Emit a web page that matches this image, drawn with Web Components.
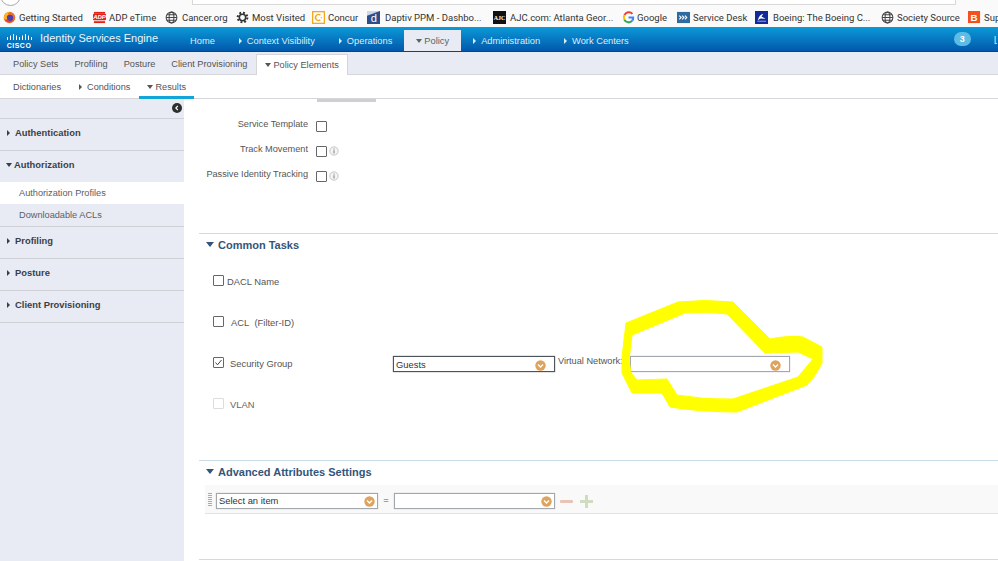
<!DOCTYPE html>
<html>
<head>
<meta charset="utf-8">
<title>Identity Services Engine</title>
<style>
    html, body { margin: 0; padding: 0; background: #fff; }
    body { width: 998px; height: 561px; overflow: hidden; position: relative; font-family: "Liberation Sans", Arial, sans-serif; }
    .vn { font: 9.2px "Liberation Sans", sans-serif; color: #555; display: inline-block; width: 75px; padding-left: 3px; box-sizing: border-box; vertical-align: top; white-space: nowrap; margin-top: 0; }
</style>
</head>
<body>
<browser-bar>
    <bookmark-item icon="firefox" gap="3" width="90">Getting Started</bookmark-item>
    <bookmark-item icon="adp" gap="3" width="72">ADP eTime</bookmark-item>
    <bookmark-item icon="globe" gap="4" width="71">Cancer.org</bookmark-item>
    <bookmark-item icon="gear" gap="3" width="76">Most Visited</bookmark-item>
    <bookmark-item icon="concur" gap="3" width="55">Concur</bookmark-item>
    <bookmark-item icon="daptiv" gap="5" width="126">Daptiv PPM - Dashbo...</bookmark-item>
    <bookmark-item icon="ajc" gap="4" width="129">AJC.com: Atlanta Geor...</bookmark-item>
    <bookmark-item icon="google" gap="2" width="55">Google</bookmark-item>
    <bookmark-item icon="service" gap="3" width="78">Service Desk</bookmark-item>
    <bookmark-item icon="boeing" gap="5" width="126">Boeing: The Boeing C...</bookmark-item>
    <bookmark-item icon="globe" gap="3" width="87">Society Source</bookmark-item>
    <bookmark-item icon="b" gap="3" width="30">Sup</bookmark-item>
</browser-bar>
<ise-header>
    <nav-tab>Home</nav-tab>
    <nav-tab caret="right">Context Visibility</nav-tab>
    <nav-tab caret="right">Operations</nav-tab>
    <nav-tab caret="down" active>Policy</nav-tab>
    <nav-tab caret="right">Administration</nav-tab>
    <nav-tab caret="right">Work Centers</nav-tab>
</ise-header>
<sub-bar kind="second">
    <sub-tab>Policy Sets</sub-tab>
    <sub-tab>Profiling</sub-tab>
    <sub-tab>Posture</sub-tab>
    <sub-tab>Client Provisioning</sub-tab>
    <sub-tab caret="down" mode="card">Policy Elements</sub-tab>
</sub-bar>
<sub-bar kind="third">
    <sub-tab>Dictionaries</sub-tab>
    <sub-tab caret="right" style="margin-left:2px">Conditions</sub-tab>
    <sub-tab caret="down" mode="underline">Results</sub-tab>
</sub-bar>
<main-area>
    <side-menu slot="side">
        <side-group label="Authentication"></side-group>
        <side-group label="Authorization" open>
            <side-link selected>Authorization Profiles</side-link>
            <side-link>Downloadable ACLs</side-link>
        </side-group>
        <side-group label="Profiling"></side-group>
        <side-group label="Posture"></side-group>
        <side-group label="Client Provisioning"></side-group>
    </side-menu>
    <top-options>
        <option-row info="">Service Template</option-row>
        <option-row info="1">Track Movement</option-row>
        <option-row info="1">Passive Identity Tracking</option-row>
    </top-options>
    <section-panel title="Common Tasks" height="227">
        <task-row indent="3">DACL Name</task-row>
        <task-row indent="7">ACL&nbsp; (Filter-ID)</task-row>
        <task-row indent="6" checked>Security Group
            <span slot="extra"><combo-box width="162" dark>Guests</combo-box><span class="vn">Virtual Network:</span><combo-box width="160"></combo-box></span>
        </task-row>
        <task-row indent="6" disabled>VLAN</task-row>
    </section-panel>
    <section-panel title="Advanced Attributes Settings" height="99">
        <attr-row></attr-row>
    </section-panel>
    <section-panel height="2"></section-panel>
</main-area>
<scribble-mark></scribble-mark>

<script>
;(function(document){
    'use strict';

    const ICONS = {
        firefox: `<circle cx="7" cy="7" r="6.2" fill="#f26f21"/><circle cx="7.5" cy="7.5" r="3.4" fill="#4a3fb5"/><path d="M1 8 C1 3 4 1 7 1 C5 2.5 5 3.5 6 4 C3.5 4.5 3.5 7 5 9 C3 9 2 8.5 1 8Z" fill="#ffb51f"/><path d="M2 10 C4 13 10 13.5 12.5 9 C11 11 7 11.5 5 9.5Z" fill="#ef3d32"/>`,
        adp: `<rect x="1" y="1" width="12" height="2" fill="#e2231a"/><rect x="0" y="3" width="14" height="7" rx="1" fill="#e2231a"/><rect x="1" y="11" width="12" height="2" fill="#e2231a"/><text x="7" y="9" text-anchor="middle" font-family="Liberation Sans" font-size="6.5" font-weight="700" font-style="italic" fill="#fff">ADP</text>`,
        globe: `<g fill="none" stroke="#444" stroke-width="1.1"><circle cx="7" cy="7" r="5.8"/><ellipse cx="7" cy="7" rx="2.6" ry="5.8"/><path d="M1.2 7H12.8M2 4H12M2 10H12"/></g>`,
        gear: `<circle cx="7" cy="7" r="3.4" fill="none" stroke="#333" stroke-width="1.6"/><circle cx="7" cy="7" r="5.2" fill="none" stroke="#333" stroke-width="2.2" stroke-dasharray="2 2.08"/>`,
        concur: `<rect x="0.7" y="0.7" width="12.6" height="12.6" fill="#fff" stroke="#f5a81c" stroke-width="1.4"/><path d="M9 4.5 A3.2 3.2 0 1 0 9 9.5" fill="none" stroke="#f5a81c" stroke-width="1.5"/><rect x="9.5" y="6.5" width="1.2" height="1.2" fill="#f5a81c"/>`,
        daptiv: `<rect x="0" y="0" width="14" height="14" fill="#2b4f8c"/><path d="M0 0H14L0 5Z" fill="#cdd8e8"/><text x="7.5" y="12" text-anchor="middle" font-family="Liberation Sans" font-size="12" fill="#fff">d</text>`,
        ajc: `<rect x="0" y="0" width="14" height="14" fill="#111"/><text x="7" y="9.5" text-anchor="middle" font-family="Liberation Serif" font-size="6.5" font-weight="700" fill="#fff">AJC</text>`,
        google: `<g fill="none" stroke-width="2.2"><path d="M11.2 3.2 A5 5 0 0 0 2.6 4.6" stroke="#ea4335"/><path d="M2.6 4.6 A5 5 0 0 0 2.6 9.4" stroke="#fbbc05"/><path d="M2.6 9.4 A5 5 0 0 0 11 10.4" stroke="#34a853"/><path d="M11 10.4 A5 5 0 0 0 12 7 H7" stroke="#4285f4"/></g>`,
        service: `<rect x="0" y="1" width="14" height="12" fill="#2f6b9e"/><path d="M2.5 5L4.5 7L2.5 9M5.5 5L7.5 7L5.5 9M8.5 5L10.5 7L8.5 9" fill="none" stroke="#fff" stroke-width="1.2"/>`,
        boeing: `<rect x="0" y="0" width="14" height="14" fill="#12299a"/><path d="M3 10 C4 6 6 3.5 9 3 L7 6 L11.5 8.5 L6 8 Z" fill="#fff"/><path d="M2.5 11H12" stroke="#9fb0e8" stroke-width="1"/>`,
        b: `<rect x="0" y="0" width="13" height="13" fill="#f4511e"/><text x="6.5" y="10.5" text-anchor="middle" font-family="Liberation Sans" font-size="10.5" font-weight="700" fill="#fff">B</text>`
    };

    const caretCss = `
        .caret{ display:inline-block; width:0; height:0; flex:none; }
        .caret.right{ border-left:3px solid currentColor; border-top:3px solid transparent; border-bottom:3px solid transparent; margin-right:5px; }
        .caret.down{ border-top:4px solid currentColor; border-left:3.5px solid transparent; border-right:3.5px solid transparent; margin-right:2px; }
    `;

    function caretHtml(kind){
        return kind ? `<span class="caret ${kind}"></span>` : '';
    }

    class BrowserBar extends HTMLElement {
        constructor(){
            super();
            this.attachShadow({ mode: 'open' }).innerHTML = `
                <style>
                    :host{ display:block; height:27px; background:#fafafa; overflow:hidden; }
                    .top{ height:5px; display:flex; }
                    .round{ width:21px; height:21px; margin-top:-15px; border-radius:50%; background:#fff; border:1px solid #a8a8a8; box-sizing:border-box; flex:none; }
                    .url{ margin-left:171px; width:764px; height:5px; background:#fff; border:1px solid #d8d8d8; border-top:0; box-sizing:border-box; flex:none; }
                    .marks{ display:flex; padding:3px 0 0 3px; height:22px; box-sizing:border-box; align-items:center; }
                </style>
                <div class="top"><div class="round"></div><div class="url"></div></div>
                <div class="marks"><slot></slot></div>
            `;
        }
    }

    class BookmarkItem extends HTMLElement {
        connectedCallback(){
            const icon = ICONS[this.getAttribute('icon')] || '';
            const gap = this.getAttribute('gap') || 4;
            const width = this.getAttribute('width') || 80;
            this.attachShadow({ mode: 'open' }).innerHTML = `
                <style>
                    :host{ display:flex; align-items:center; flex:none; width:${width}px; white-space:nowrap; font:9.5px/14px Roboto, sans-serif; color:#333; }
                    svg{ width:13px; height:13px; flex:none; margin-right:${gap}px; }
                </style>
                <svg viewBox="0 0 14 14">${icon}</svg><slot></slot>
            `;
        }
    }

    class IseHeader extends HTMLElement {
        constructor(){
            super();
            this.attachShadow({ mode: 'open' }).innerHTML = `
                <style>
                    :host{ display:flex; height:25px; box-sizing:border-box; background:linear-gradient(#0b9ad8,#0258ab); border-bottom:1px solid #03439a; color:#fff; align-items:stretch; }
                    .logo{ width:26px; margin:5px 0 0 6px; flex:none; }
                    .title{ width:138px; margin-left:8px; flex:none; font-size:11px; line-height:23px; color:#eef6fb; white-space:nowrap; }
                    nav{ display:flex; align-items:flex-end; flex:none; }
                    .badge{ margin:5px 0 0 313px; width:17px; height:14px; flex:none; border-radius:7px; background:#5cbce6; font:bold 9px/14px "Liberation Sans",sans-serif; text-align:center; }
                    .user{ margin-left:23px; width:3px; flex:none; overflow:hidden; font-size:10px; line-height:27px; opacity:.8; }
                </style>
                <svg class="logo" viewBox="0 0 26 15">
                    <g fill="#fff">
                        <rect x="1" y="3" width="1" height="3"/><rect x="4" y="1.5" width="1" height="4.5"/><rect x="7" y="0" width="1" height="6"/><rect x="10" y="1.5" width="1" height="4.5"/><rect x="13" y="3" width="1" height="3"/><rect x="16" y="1.5" width="1" height="4.5"/><rect x="19" y="0" width="1" height="6"/><rect x="22" y="1.5" width="1" height="4.5"/><rect x="25" y="3" width="1" height="3"/>
                        <text x="13" y="13.5" text-anchor="middle" font-family="Liberation Sans" font-size="7" font-weight="700" letter-spacing=".5">CISCO</text>
                    </g>
                </svg>
                <div class="title">Identity Services Engine</div>
                <nav><slot></slot></nav>
                <div class="badge">3</div>
                <div class="user">L</div>
            `;
        }
    }

    class NavTab extends HTMLElement {
        connectedCallback(){
            const active = this.hasAttribute('active');
            this.attachShadow({ mode: 'open' }).innerHTML = `
                <style>
                    ${caretCss}
                    :host{ display:flex; align-items:center; height:21px; padding:1px 12px 0; white-space:nowrap; font-size:9.3px; box-sizing:border-box;
                        color:${active ? '#566' : '#dcecf6'}; background:${active ? '#e8ebf3' : 'transparent'}; }
                </style>
                ${caretHtml(this.getAttribute('caret'))}<slot></slot>
            `;
        }
    }

    class SubBar extends HTMLElement {
        connectedCallback(){
            const second = this.getAttribute('kind') === 'second';
            this.attachShadow({ mode: 'open' }).innerHTML = `
                <style>
                    :host{ display:flex; align-items:flex-end; box-sizing:border-box; padding-left:5px; border-bottom:1px solid #d4d6da;
                        height:${second ? 23 : 24}px; background:${second ? '#e8ebf3' : '#fff'}; --tab-shift:${second ? 0 : 2}px; }
                </style>
                <slot></slot>
            `;
        }
    }

    class SubTab extends HTMLElement {
        connectedCallback(){
            const mode = this.getAttribute('mode');
            let box = 'height:20px; padding-bottom:var(--tab-shift);';
            if(mode === 'card') box = 'height:21px; background:#fff; border:1px solid #d4d6da; border-bottom:0; margin-left:1px; margin-bottom:-1px;';
            if(mode === 'underline') box = 'height:24px; border-bottom:3px solid #12a5d8; margin-left:1px; margin-bottom:-1px; padding-top:3px;';
            this.attachShadow({ mode: 'open' }).innerHTML = `
                <style>
                    ${caretCss}
                    :host{ display:flex; align-items:center; box-sizing:border-box; padding-left:8px; padding-right:8px; white-space:nowrap; font-size:9.2px; color:#555; ${box} }
                </style>
                ${caretHtml(this.getAttribute('caret'))}<slot></slot>
            `;
        }
    }

    class MainArea extends HTMLElement {
        constructor(){
            super();
            this.attachShadow({ mode: 'open' }).innerHTML = `
                <style>
                    :host{ display:grid; grid-template-columns:184px 1fr; height:462px; }
                    .content{ padding-left:15px; min-width:0; }
                </style>
                <slot name="side"></slot>
                <div class="content"><slot></slot></div>
            `;
        }
    }

    class SideMenu extends HTMLElement {
        constructor(){
            super();
            this.attachShadow({ mode: 'open' }).innerHTML = `
                <style>
                    :host{ display:block; background:#e8ebf3; }
                    .bar{ height:19px; display:flex; justify-content:flex-end; align-items:center; padding:0 2px 0 0; }
                    .back{ width:10px; height:10px; border-radius:50%; background:#2e2e2e; display:flex; align-items:center; justify-content:center; margin-top:-1px; }
                    .back svg{ width:6px; height:6px; }
                </style>
                <div class="bar"><div class="back"><svg viewBox="0 0 6 6"><path d="M3.8 1L1.8 3L3.8 5" fill="none" stroke="#fff" stroke-width="1.1"/></svg></div></div>
                <slot></slot>
            `;
        }
    }

    class SideGroup extends HTMLElement {
        connectedCallback(){
            const open = this.hasAttribute('open');
            this.attachShadow({ mode: 'open' }).innerHTML = `
                <style>
                    ${caretCss}
                    :host{ display:block; border-top:1px solid #cfd1d6; }
                    :host(:last-child){ border-bottom:1px solid #cfd1d6; }
                    .head{ height:31px; display:flex; align-items:center; padding:0 0 4px ${open ? 6 : 7}px; font-size:9.4px; font-weight:700; color:#3a3f47; box-sizing:border-box; }
                </style>
                <div class="head">${caretHtml(open ? 'down' : 'right')}${this.getAttribute('label')}</div>
                <slot></slot>
            `;
        }
    }

    class SideLink extends HTMLElement {
        connectedCallback(){
            this.attachShadow({ mode: 'open' }).innerHTML = `
                <style>
                    :host{ display:flex; align-items:center; height:22px; padding-left:19px; font-size:9.2px; color:#5a6068;
                        background:${this.hasAttribute('selected') ? '#fff' : 'transparent'}; }
                </style>
                <slot></slot>
            `;
        }
    }

    class TopOptions extends HTMLElement {
        constructor(){
            super();
            this.attachShadow({ mode: 'open' }).innerHTML = `
                <style>
                    :host{ display:block; height:134px; }
                    .stub{ width:59px; height:3px; margin-left:118px; background:#cfcfcf; }
                    .rows{ padding-top:11px; }
                </style>
                <div class="stub"></div>
                <div class="rows"><slot></slot></div>
            `;
        }
    }

    class OptionRow extends HTMLElement {
        connectedCallback(){
            const info = this.getAttribute('info') ? `<svg class="info" viewBox="0 0 10 10"><circle cx="5" cy="5" r="4.2" fill="#f4f4f4" stroke="#bbb" stroke-width=".8"/><path d="M5 4.2V7.6M5 2.4V3.4" stroke="#888" stroke-width="1.1"/></svg>` : '';
            this.attachShadow({ mode: 'open' }).innerHTML = `
                <style>
                    :host{ display:flex; height:25px; align-items:center; font-size:9.2px; color:#555; }
                    .label{ width:109px; flex:none; text-align:right; white-space:nowrap; margin-top:-3px; }
                    .box{ width:9px; height:9px; margin:1px 0 0 8px; border:1px solid #666; background:#fff; flex:none; border-radius:1px; }
                    .info{ width:10px; height:10px; margin:1px 0 0 2px; }
                </style>
                <div class="label"><slot></slot></div><div class="box"></div>${info}
            `;
        }
    }

    class SectionPanel extends HTMLElement {
        connectedCallback(){
            const title = this.getAttribute('title');
            const head = title ? `<div class="head"><span class="caret"></span>${title}</div>` : '';
            this.attachShadow({ mode: 'open' }).innerHTML = `
                <style>
                    :host{ display:block; box-sizing:border-box; height:${this.getAttribute('height')}px; border-top:1px solid #c9dce8; }
                    .head{ height:21px; display:flex; align-items:center; padding-left:7px; font-size:11px; font-weight:700; color:#34557a; }
                    .caret{ width:0; height:0; border-top:5px solid #34557a; border-left:4px solid transparent; border-right:4px solid transparent; margin-right:4px; }
                </style>
                ${head}<slot></slot>
            `;
        }
    }

    class TaskRow extends HTMLElement {
        connectedCallback(){
            const checked = this.hasAttribute('checked');
            const disabled = this.hasAttribute('disabled');
            const indent = this.getAttribute('indent') || 6;
            this.attachShadow({ mode: 'open' }).innerHTML = `
                <style>
                    :host{ display:flex; height:41px; align-items:center; font-size:9.4px; color:${disabled ? '#666' : '#555'}; }
                    :host(:first-of-type){ margin-top:6px; }
                    .box{ width:9px; height:9px; margin:-2px 0 0 14px; border:1px solid ${disabled ? '#ddd' : '#666'}; flex:none; border-radius:1px; display:flex; }
                    .box svg{ width:9px; height:9px; }
                    .text{ margin-left:${indent}px; white-space:nowrap; width:163px; flex:none; }
                    .extra{ display:flex; margin-top:1px; }
                </style>
                <div class="box">${checked ? '<svg viewBox="0 0 9 9"><path d="M1.5 4.5L3.5 6.8L7.5 2" fill="none" stroke="#444" stroke-width="1"/></svg>' : ''}</div>
                <div class="text"><slot></slot></div>
                <div class="extra"><slot name="extra"></slot></div>
            `;
        }
    }

    class ComboBox extends HTMLElement {
        connectedCallback(){
            const dark = this.hasAttribute('dark');
            const pad = this.hasAttribute('tight') ? 2 : 8;
            this.attachShadow({ mode: 'open' }).innerHTML = `
                <style>
                    :host{ display:inline-flex; align-items:center; box-sizing:border-box; width:${this.getAttribute('width')}px; height:16px; padding:0 ${pad}px 0 2px; vertical-align:top;
                        border:1px solid ${dark ? '#4d545c' : '#a3a8ae'}; box-shadow:0 0 1px ${dark ? '#555c64' : '#b5bac0'}; background:#fff; font-size:9.4px; color:#333; }
                    .text{ flex:1; white-space:nowrap; }
                    svg{ width:11px; height:11px; flex:none; margin-top:2px; }
                </style>
                <div class="text"><slot></slot></div>
                <svg viewBox="0 0 11 11"><circle cx="5.5" cy="5.5" r="5.2" fill="#dfa35d"/><path d="M3 4.4L5.5 6.9L8 4.4" fill="none" stroke="#fff" stroke-width="1.4"/></svg>
            `;
        }
    }

    class AttrRow extends HTMLElement {
        constructor(){
            super();
            this.attachShadow({ mode: 'open' }).innerHTML = `
                <style>
                    :host{ display:flex; align-items:center; height:29px; margin:3px 0 0 6px; padding-top:3px; box-sizing:border-box; background:#f9f9f9; border-bottom:1px solid #e3e3e3; font-size:10px; color:#555; }
                    .grip{ width:4px; height:13px; margin:-2px 4px 0 3px; background:repeating-linear-gradient(#aaa 0 1px,#f9f9f9 1px 2px); flex:none; }
                    .eq{ width:16px; text-align:center; font-size:9.4px; margin-top:-2px; }
                    .act{ margin:2px 0 0 5px; width:13px; height:13px; flex:none; }
                    .act + .act{ margin-left:7px; }
                </style>
                <div class="grip"></div>
                <combo-box width="162" tight>Select an item</combo-box>
                <div class="eq">=</div>
                <combo-box width="161" tight></combo-box>
                <svg class="act" viewBox="0 0 13 13"><rect x="0" y="5" width="13" height="3" rx="1" fill="#e7c4b4"/></svg>
                <svg class="act" viewBox="0 0 13 13"><path d="M5 0H8V5H13V8H8V13H5V8H0V5H5Z" fill="#cfdcc0"/></svg>
            `;
        }
    }

    class ScribbleMark extends HTMLElement {
        constructor(){
            super();
            this.attachShadow({ mode: 'open' }).innerHTML = `
                <style>
                    :host{ position:absolute; left:0; top:0; width:998px; height:561px; pointer-events:none; }
                    svg{ display:block; width:100%; height:100%; }
                </style>
                <svg viewBox="0 0 998 561">
                    <path fill-rule="evenodd" fill="#ffff00" stroke="#ffff00" stroke-width="1" stroke-linejoin="round"
                        d="M626 323L678 302Q705 299 733 302L770 339Q790 335 803 337L822 347L822 363Q816 376 807 385L737 412Q700 412 670 407L662 393L632 393L622 373L622 357Z
                           M632 335L629 360L631 373L637 380L667 379L677 395Q705 400 733 399L798 377L813 359L798 352L765 353L727 314Q705 311 685 313Z"/>
                </svg>
            `;
        }
    }

    customElements.define('browser-bar', BrowserBar);
    customElements.define('bookmark-item', BookmarkItem);
    customElements.define('ise-header', IseHeader);
    customElements.define('nav-tab', NavTab);
    customElements.define('sub-bar', SubBar);
    customElements.define('sub-tab', SubTab);
    customElements.define('main-area', MainArea);
    customElements.define('side-menu', SideMenu);
    customElements.define('side-group', SideGroup);
    customElements.define('side-link', SideLink);
    customElements.define('top-options', TopOptions);
    customElements.define('option-row', OptionRow);
    customElements.define('section-panel', SectionPanel);
    customElements.define('task-row', TaskRow);
    customElements.define('combo-box', ComboBox);
    customElements.define('attr-row', AttrRow);
    customElements.define('scribble-mark', ScribbleMark);

})(document);
</script>
</body>
</html>
